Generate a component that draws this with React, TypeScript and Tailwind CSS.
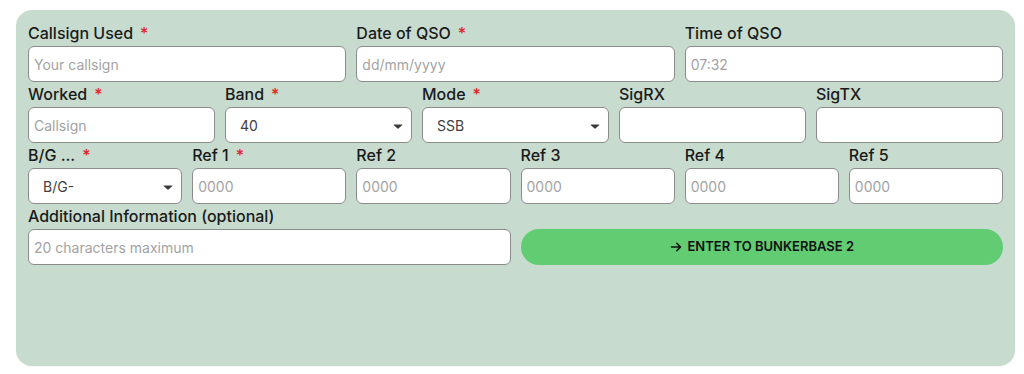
import React from 'react';

function Label({ text, required }: { text: string; required?: boolean }) {
  return (
    <label className="mb-[2px] block h-[23px] pt-[2px] text-[16px] leading-[21px] font-medium text-[#1a1a1a]">
      {text}
      {required && <span className="ml-[7px] text-[#e02424]">*</span>}
    </label>
  );
}

function TextField({
  label,
  required,
  placeholder,
}: {
  label: string;
  required?: boolean;
  placeholder?: string;
}) {
  return (
    <div className="min-w-0">
      <Label text={label} required={required} />
      <input
        className="h-9 w-full rounded-md border border-[#8c8c8c] bg-white px-[5px] text-[14px] text-[#333] placeholder:text-[#a3a3a3] outline-none"
        placeholder={placeholder}
      />
    </div>
  );
}

function SelectField({
  label,
  required,
  value,
}: {
  label: string;
  required?: boolean;
  value: string;
}) {
  return (
    <div className="min-w-0">
      <Label text={label} required={required} />
      <div className="flex h-9 w-full items-center justify-between rounded-md border border-[#8c8c8c] bg-white pr-[8px] pl-[14px] text-[14px] text-[#404040]">
        <span>{value}</span>
        {/* caret */}
        <svg width="10" height="5" viewBox="0 0 11 6" className="mt-[3px]">
          <path d="M1 0.6h9c.6 0 .9.6.5 1L6 5.4c-.3.3-.7.3-1 0L.5 1.6C.1 1.2.4.6 1 .6z" fill="#3a3a3a" />
        </svg>
      </div>
    </div>
  );
}

export default function App() {
  return (
    <div className="min-h-[374px] bg-white pt-[10px] pr-[9px] pl-4" style={{ fontFamily: 'Inter, "Noto Sans", sans-serif' }}>
      <div className="h-[356px] rounded-2xl bg-[#c7dccf] px-3 pt-[11px] shadow-[0_1px_2px_rgba(0,0,0,0.04)]">
        <div className="grid grid-cols-3 gap-x-[10px]">
          <TextField label="Callsign Used" required placeholder="Your callsign" />
          <TextField label="Date of QSO" required placeholder="dd/mm/yyyy" />
          <TextField label="Time of QSO" placeholder="07:32" />
        </div>

        <div className="grid grid-cols-5 gap-x-[10px]">
          <TextField label="Worked" required placeholder="Callsign" />
          <SelectField label="Band" required value="40" />
          <SelectField label="Mode" required value="SSB" />
          <TextField label="SigRX" />
          <TextField label="SigTX" />
        </div>

        <div className="grid grid-cols-6 gap-x-[10px]">
          <SelectField label="B/G ..." required value="B/G-" />
          <TextField label="Ref 1" required placeholder="0000" />
          <TextField label="Ref 2" placeholder="0000" />
          <TextField label="Ref 3" placeholder="0000" />
          <TextField label="Ref 4" placeholder="0000" />
          <TextField label="Ref 5" placeholder="0000" />
        </div>

        <div className="grid grid-cols-2 gap-x-[10px]">
          <TextField label="Additional Information (optional)" placeholder="20 characters maximum" />
          <div className="flex items-end">
            <button className="flex h-9 w-full items-center justify-center gap-[6px] rounded-full bg-[#62cc72] text-[13px] font-semibold text-[#111]">
              <svg width="12" height="12" viewBox="0 0 448 512">
                <path
                  fill="#111"
                  d="M438.6 278.6c12.5-12.5 12.5-32.8 0-45.3l-160-160c-12.5-12.5-32.8-12.5-45.3 0s-12.5 32.8 0 45.3L338.8 224 32 224c-17.7 0-32 14.3-32 32s14.3 32 32 32l306.7 0L233.4 393.4c-12.5 12.5-12.5 32.8 0 45.3s32.8 12.5 45.3 0l160-160z"
                />
              </svg>
              ENTER TO BUNKERBASE 2
            </button>
          </div>
        </div>
      </div>
    </div>
  );
}
